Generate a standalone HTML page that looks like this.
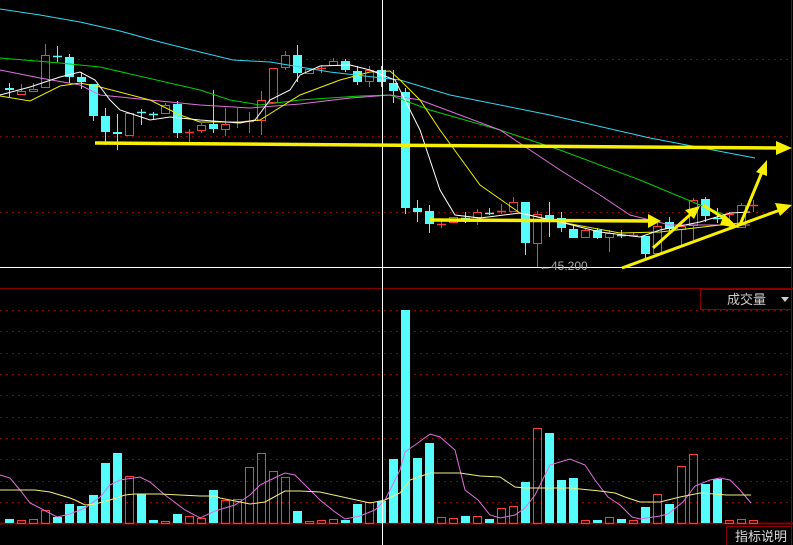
<!DOCTYPE html><html><head><meta charset="utf-8"><style>
html,body{margin:0;padding:0;background:#000;width:793px;height:545px;overflow:hidden}
svg{display:block}
</style></head><body>
<svg id="s" width="793" height="545" xmlns="http://www.w3.org/2000/svg" style="font-family:'Liberation Sans','Noto Sans CJK SC',sans-serif">
<rect width="793" height="545" fill="#000"/>
<g stroke="#8a0000" stroke-dasharray="2,4" stroke-width="1">
<line x1="0" y1="59.5" x2="791" y2="59.5"/><line x1="0" y1="136.5" x2="791" y2="136.5"/><line x1="0" y1="212.5" x2="791" y2="212.5"/>
<line x1="0" y1="310.5" x2="791" y2="310.5"/><line x1="0" y1="331.5" x2="791" y2="331.5"/><line x1="0" y1="353.5" x2="791" y2="353.5"/><line x1="0" y1="374.5" x2="791" y2="374.5"/><line x1="0" y1="395.5" x2="791" y2="395.5"/><line x1="0" y1="417.5" x2="791" y2="417.5"/><line x1="0" y1="438.5" x2="791" y2="438.5"/><line x1="0" y1="459.5" x2="791" y2="459.5"/><line x1="0" y1="481.5" x2="791" y2="481.5"/><line x1="0" y1="502.5" x2="791" y2="502.5"/>
</g>
<line x1="0" y1="288.5" x2="793" y2="288.5" stroke="#8a0000"/>
<line x1="0" y1="523.5" x2="793" y2="523.5" stroke="#8a0000" stroke-width="2"/>
<line x1="791.5" y1="0" x2="791.5" y2="545" stroke="#8a0000"/>
<g id="c"></g>
<g fill="none" stroke-width="1">
<polyline stroke="#30d8f0" points="0,9 40,15 80,22 120,31 160,42 200,52 233,60 270,62 330,72 400,80 450,95 550,115 650,138 755,158"/>
<polyline stroke="#00d000" points="0,58 60,63 100,67 200,90 230,100 260,105 300,100 360,96 390,95 430,110 500,130 560,150 640,180 700,205 725,215"/>
<polyline stroke="#e070e0" points="0,70 40,78 80,85 100,95 150,100 200,105 250,108 300,104 350,98 390,95 420,100 500,130 560,170 600,195 630,215 670,225 750,225"/>
<polyline stroke="#f0f000" points="0,96 30,101 60,86 80,83 100,87 150,100 180,115 200,122 240,122 260,120 300,95 340,80 370,72 390,71 400,80 420,100 440,130 480,185 520,213 560,222 620,233 660,232 720,225 750,222"/>
<polyline stroke="#fff" points="0,95 30,87 60,77 80,72 95,80 110,100 120,110 150,120 170,117 200,120 240,123 255,120 270,100 290,90 300,75 320,66 350,65 370,70 395,80 405,100 420,130 440,190 455,215 480,218 520,213 560,222 600,232 640,237 660,230 700,222 730,213 750,212"/>
<polyline stroke="#e070e0" points="0,475 10,478 20,490 30,503 40,508 57,517 70,514 85,508 100,497 110,485 120,480 140,477 150,482 165,495 185,510 200,518 215,511 235,505 250,495 260,485 270,480 285,473 295,475 305,485 320,500 335,512 345,519 360,516 375,510 385,500 400,470 405,452 415,445 430,434 440,437 455,450 465,490 478,500 490,515 500,518 515,515 525,508 535,495 550,465 570,459 585,465 595,480 608,497 620,505 632,517 640,519 660,516 668,514 683,502 695,486 710,480 720,478 730,480 740,490 751,503"/>
<polyline stroke="#f0f080" points="0,490 35,490 50,492 60,495 70,498 75,500 85,505 95,504 110,500 125,495 135,494 160,494 200,496 215,496 220,498 240,502 250,504 265,502 285,491 300,491 320,492 370,503 385,500 395,495 400,493 410,480 430,473 460,473 480,476 500,477 515,487 525,488 545,488 570,488 600,491 615,493 625,497 640,502 660,502 680,497 700,493 715,494 726,495 751,495"/>
</g>
<line x1="0" y1="267.5" x2="791" y2="267.5" stroke="#fff"/>
<line x1="382.5" y1="0" x2="382.5" y2="545" stroke="#fff"/>
<g fill="#f8f000" stroke="#f8f000" stroke-width="3.5">
<line x1="95" y1="143" x2="780" y2="148"/><polygon stroke="none" points="792,148 776,141 776,155"/>
<line x1="430" y1="220" x2="652" y2="221"/><polygon stroke="none" points="661,221 648,214 648,228"/>
<line x1="622" y1="268" x2="780" y2="210" stroke-width="3"/><polygon stroke="none" points="792,205 775,203 780,216"/>
<line x1="653" y1="248" x2="692" y2="213" stroke-width="3"/><polygon stroke="none" points="700,206 685,210 694,219"/>
<line x1="703" y1="205" x2="730" y2="222" stroke-width="3"/><polygon stroke="none" points="739,228 724,214 720,225"/>
<line x1="740" y1="225" x2="762" y2="172" stroke-width="3"/><polygon stroke="none" points="767,160 756,172 767,176"/>
</g>
<text x="539" y="270" fill="#aaa" font-size="12">←45.200</text>
<rect x="700.5" y="289.5" width="91" height="20" fill="#000" stroke="#8a0000"/>
<text x="727" y="304" fill="#ccc" font-size="13">成交量</text>
<polygon points="781,297 789,297 785,302" fill="#ccc"/>
<rect x="726.5" y="526.5" width="65" height="19" fill="#000" stroke="#8a0000"/>
<text x="735" y="541" fill="#ddd" font-size="13">指标说明</text>
</svg>
<script>
var R='#ff3a3a',C='#54fcfc';
// [up?, bodyTop, bodyBot, wickTop, wickBot, volTop]
var d=[[0,88,90,83,97,519],[1,91,94,84,94,520],[1,89,91,83,91,519],[1,55,87,44,87,510],[0,56,57,46,62,517],[0,57,77,54,83,504],[0,77,82,72,89,506],[0,84,116,84,121,495],[0,116,132,108,145,463],[0,132,134,114,150,453],[1,113,135,113,135,476],[0,112,113,109,125,494],[0,114,115,112,120,520],[1,105,113,103,113,521],[0,104,133,101,138,514],[1,132,133,129,143,516],[1,125,130,123,133,518],[0,124,129,90,133,490],[1,124,129,108,136,500],[1,122,123,108,128,499],[1,121,122,112,133,467],[1,100,120,91,135,453],[1,68,102,68,103,471],[1,55,67,51,70,477],[0,55,73,45,82,511],[1,69,73,69,73,521],[1,68,69,65,73,520],[1,61,65,58,65,519],[0,61,70,59,72,520],[0,71,82,66,85,504],[1,70,81,66,87,502],[0,70,82,66,87,501],[0,83,91,70,103,459],[0,92,208,88,214,310],[0,208,212,200,222,458],[0,211,224,205,233,443],[1,224,225,219,228,517],[1,217,222,217,222,518],[0,218,219,212,223,516],[1,212,217,209,225,516],[0,213,214,208,215,519],[1,211,212,204,214,508],[1,202,211,197,212,506],[0,202,243,202,255,482],[1,214,243,211,267,428],[0,215,221,202,237,433],[0,218,228,212,232,480],[0,229,238,224,238,478],[1,230,237,228,237,520],[0,230,238,228,239,520],[1,233,237,230,252,517],[0,235,236,230,238,519],[1,235,236,232,237,520],[0,236,254,236,259,507],[1,226,253,223,253,494],[0,222,229,217,232,504],[1,226,229,223,245,466],[1,200,225,198,240,454],[0,199,216,197,222,484],[0,218,219,208,223,479],[1,214,215,212,227,520],[1,205,227,203,227,519],[1,205,206,200,212,520]];
var h='';
d.forEach(function(a,i){var x=9+12*i,c=a[0]?R:C;
h+='<line x1="'+(x+.5)+'" y1="'+a[3]+'" x2="'+(x+.5)+'" y2="'+a[4]+'" stroke="'+c+'"/>';
var bh=a[2]-a[1];
if(bh<2){h+='<line x1="'+(x-4)+'" y1="'+(a[1]+.5)+'" x2="'+(x+5)+'" y2="'+(a[1]+.5)+'" stroke="'+c+'" stroke-width="1.5"/>';}
else if(a[0]){h+='<rect x="'+(x-3.5)+'" y="'+(a[1]+.5)+'" width="8" height="'+bh+'" fill="#000" stroke="'+c+'"/>';}
else{h+='<rect x="'+(x-4)+'" y="'+a[1]+'" width="9" height="'+bh+'" fill="'+c+'"/>';}
if(a[0])h+='<rect x="'+(x-3.5)+'" y="'+(a[5]+.5)+'" width="8" height="'+(523-a[5])+'" fill="none" stroke="'+c+'"/>';
else h+='<rect x="'+(x-4)+'" y="'+a[5]+'" width="9" height="'+(523-a[5])+'" fill="'+c+'"/>';
});
document.getElementById('c').innerHTML=h;
</script>
</body></html>
